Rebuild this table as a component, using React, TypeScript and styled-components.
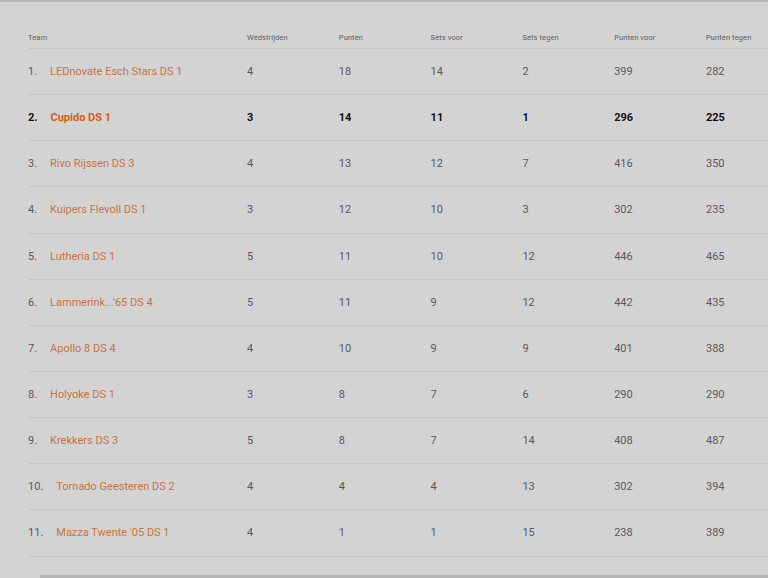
import * as React from 'react';
import styled, { createGlobalStyle } from 'styled-components';

type Standing = {
	rank: number;
	team: string;
	played: number;
	points: number;
	setsFor: number;
	setsAgainst: number;
	pointsFor: number;
	pointsAgainst: number;
	own?: boolean;
};

const standings: Standing[] = [
	{ rank: 1, team: 'LEDnovate Esch Stars DS 1', played: 4, points: 18, setsFor: 14, setsAgainst: 2, pointsFor: 399, pointsAgainst: 282 },
	{ rank: 2, team: 'Cupido DS 1', played: 3, points: 14, setsFor: 11, setsAgainst: 1, pointsFor: 296, pointsAgainst: 225, own: true },
	{ rank: 3, team: 'Rivo Rijssen DS 3', played: 4, points: 13, setsFor: 12, setsAgainst: 7, pointsFor: 416, pointsAgainst: 350 },
	{ rank: 4, team: 'Kuipers Flevoll DS 1', played: 3, points: 12, setsFor: 10, setsAgainst: 3, pointsFor: 302, pointsAgainst: 235 },
	{ rank: 5, team: 'Lutheria DS 1', played: 5, points: 11, setsFor: 10, setsAgainst: 12, pointsFor: 446, pointsAgainst: 465 },
	{ rank: 6, team: "Lammerink...'65 DS 4", played: 5, points: 11, setsFor: 9, setsAgainst: 12, pointsFor: 442, pointsAgainst: 435 },
	{ rank: 7, team: 'Apollo 8 DS 4', played: 4, points: 10, setsFor: 9, setsAgainst: 9, pointsFor: 401, pointsAgainst: 388 },
	{ rank: 8, team: 'Holyoke DS 1', played: 3, points: 8, setsFor: 7, setsAgainst: 6, pointsFor: 290, pointsAgainst: 290 },
	{ rank: 9, team: 'Krekkers DS 3', played: 5, points: 8, setsFor: 7, setsAgainst: 14, pointsFor: 408, pointsAgainst: 487 },
	{ rank: 10, team: 'Tornado Geesteren DS 2', played: 4, points: 4, setsFor: 4, setsAgainst: 13, pointsFor: 302, pointsAgainst: 394 },
	{ rank: 11, team: "Mazza Twente '05 DS 1", played: 4, points: 1, setsFor: 1, setsAgainst: 15, pointsFor: 238, pointsAgainst: 389 },
];

const headers = ['Team', 'Wedstrijden', 'Punten', 'Sets voor', 'Sets tegen', 'Punten voor', 'Punten tegen'];

function App() {
	return (
		<>
			<GlobalStyle />
			<Page>
				<Table>
					<HeaderRow>
						{headers.map((h) => (
							<HeaderCell key={h}>{h}</HeaderCell>
						))}
					</HeaderRow>
					{standings.map((s) => (
						<Row key={s.rank} $own={s.own}>
							<TeamCell>
								<Rank>{s.rank}.</Rank>
								<TeamName $own={s.own}>{s.team}</TeamName>
							</TeamCell>
							<Cell>{s.played}</Cell>
							<Cell>{s.points}</Cell>
							<Cell>{s.setsFor}</Cell>
							<Cell>{s.setsAgainst}</Cell>
							<Cell>{s.pointsFor}</Cell>
							<Cell>{s.pointsAgainst}</Cell>
						</Row>
					))}
				</Table>
				<ScrollThumb />
			</Page>
		</>
	);
}

export default App;

var GlobalStyle = createGlobalStyle`
	html, body {
		margin: 0;
		padding: 0;
		background: #d3d3d3;
		overflow: hidden;
	}
	body {
		font-family: Roboto, "Liberation Sans", sans-serif;
	}
`;

var Page = styled.div`
	width: 768px;
	height: 578px;
	box-sizing: border-box;
	border-top: 2px solid #b6b6b6;
	background: #d3d3d3;
	overflow: hidden;
	display: flex;
	flex-direction: column;
`;

var Table = styled.div`
	margin: 24px 0 0 28px;
	display: flex;
	flex-direction: column;
	width: 800px;
`;

var columns = '219px repeat(6, 91.8px)';

var HeaderRow = styled.div`
	display: grid;
	grid-template-columns: ${columns};
	height: 22px;
	align-items: center;
	border-bottom: 1px solid #c5c5c5;
`;

var HeaderCell = styled.div`
	font-size: 7.5px;
	color: #5e5e5e;
	letter-spacing: 0.1px;
`;

var Row = styled.div<{ $own?: boolean }>`
	display: grid;
	grid-template-columns: ${columns};
	height: 45.15px;
	align-items: center;
	border-bottom: 1px solid #c5c5c5;
	font-size: 11px;
	color: ${(p) => (p.$own ? '#111' : '#5a5a5a')};
	font-weight: ${(p) => (p.$own ? 700 : 400)};
`;

var TeamCell = styled.div`
	display: flex;
	align-items: baseline;
`;

var Rank = styled.span`
	margin-right: 13px;
`;

var TeamName = styled.span<{ $own?: boolean }>`
	color: ${(p) => (p.$own ? '#d55f0e' : '#c8743f')};
`;

var Cell = styled.div``;

var ScrollThumb = styled.div`
	margin: auto 0 0 40px;
	height: 3px;
	background: #b3b3b3;
`;
